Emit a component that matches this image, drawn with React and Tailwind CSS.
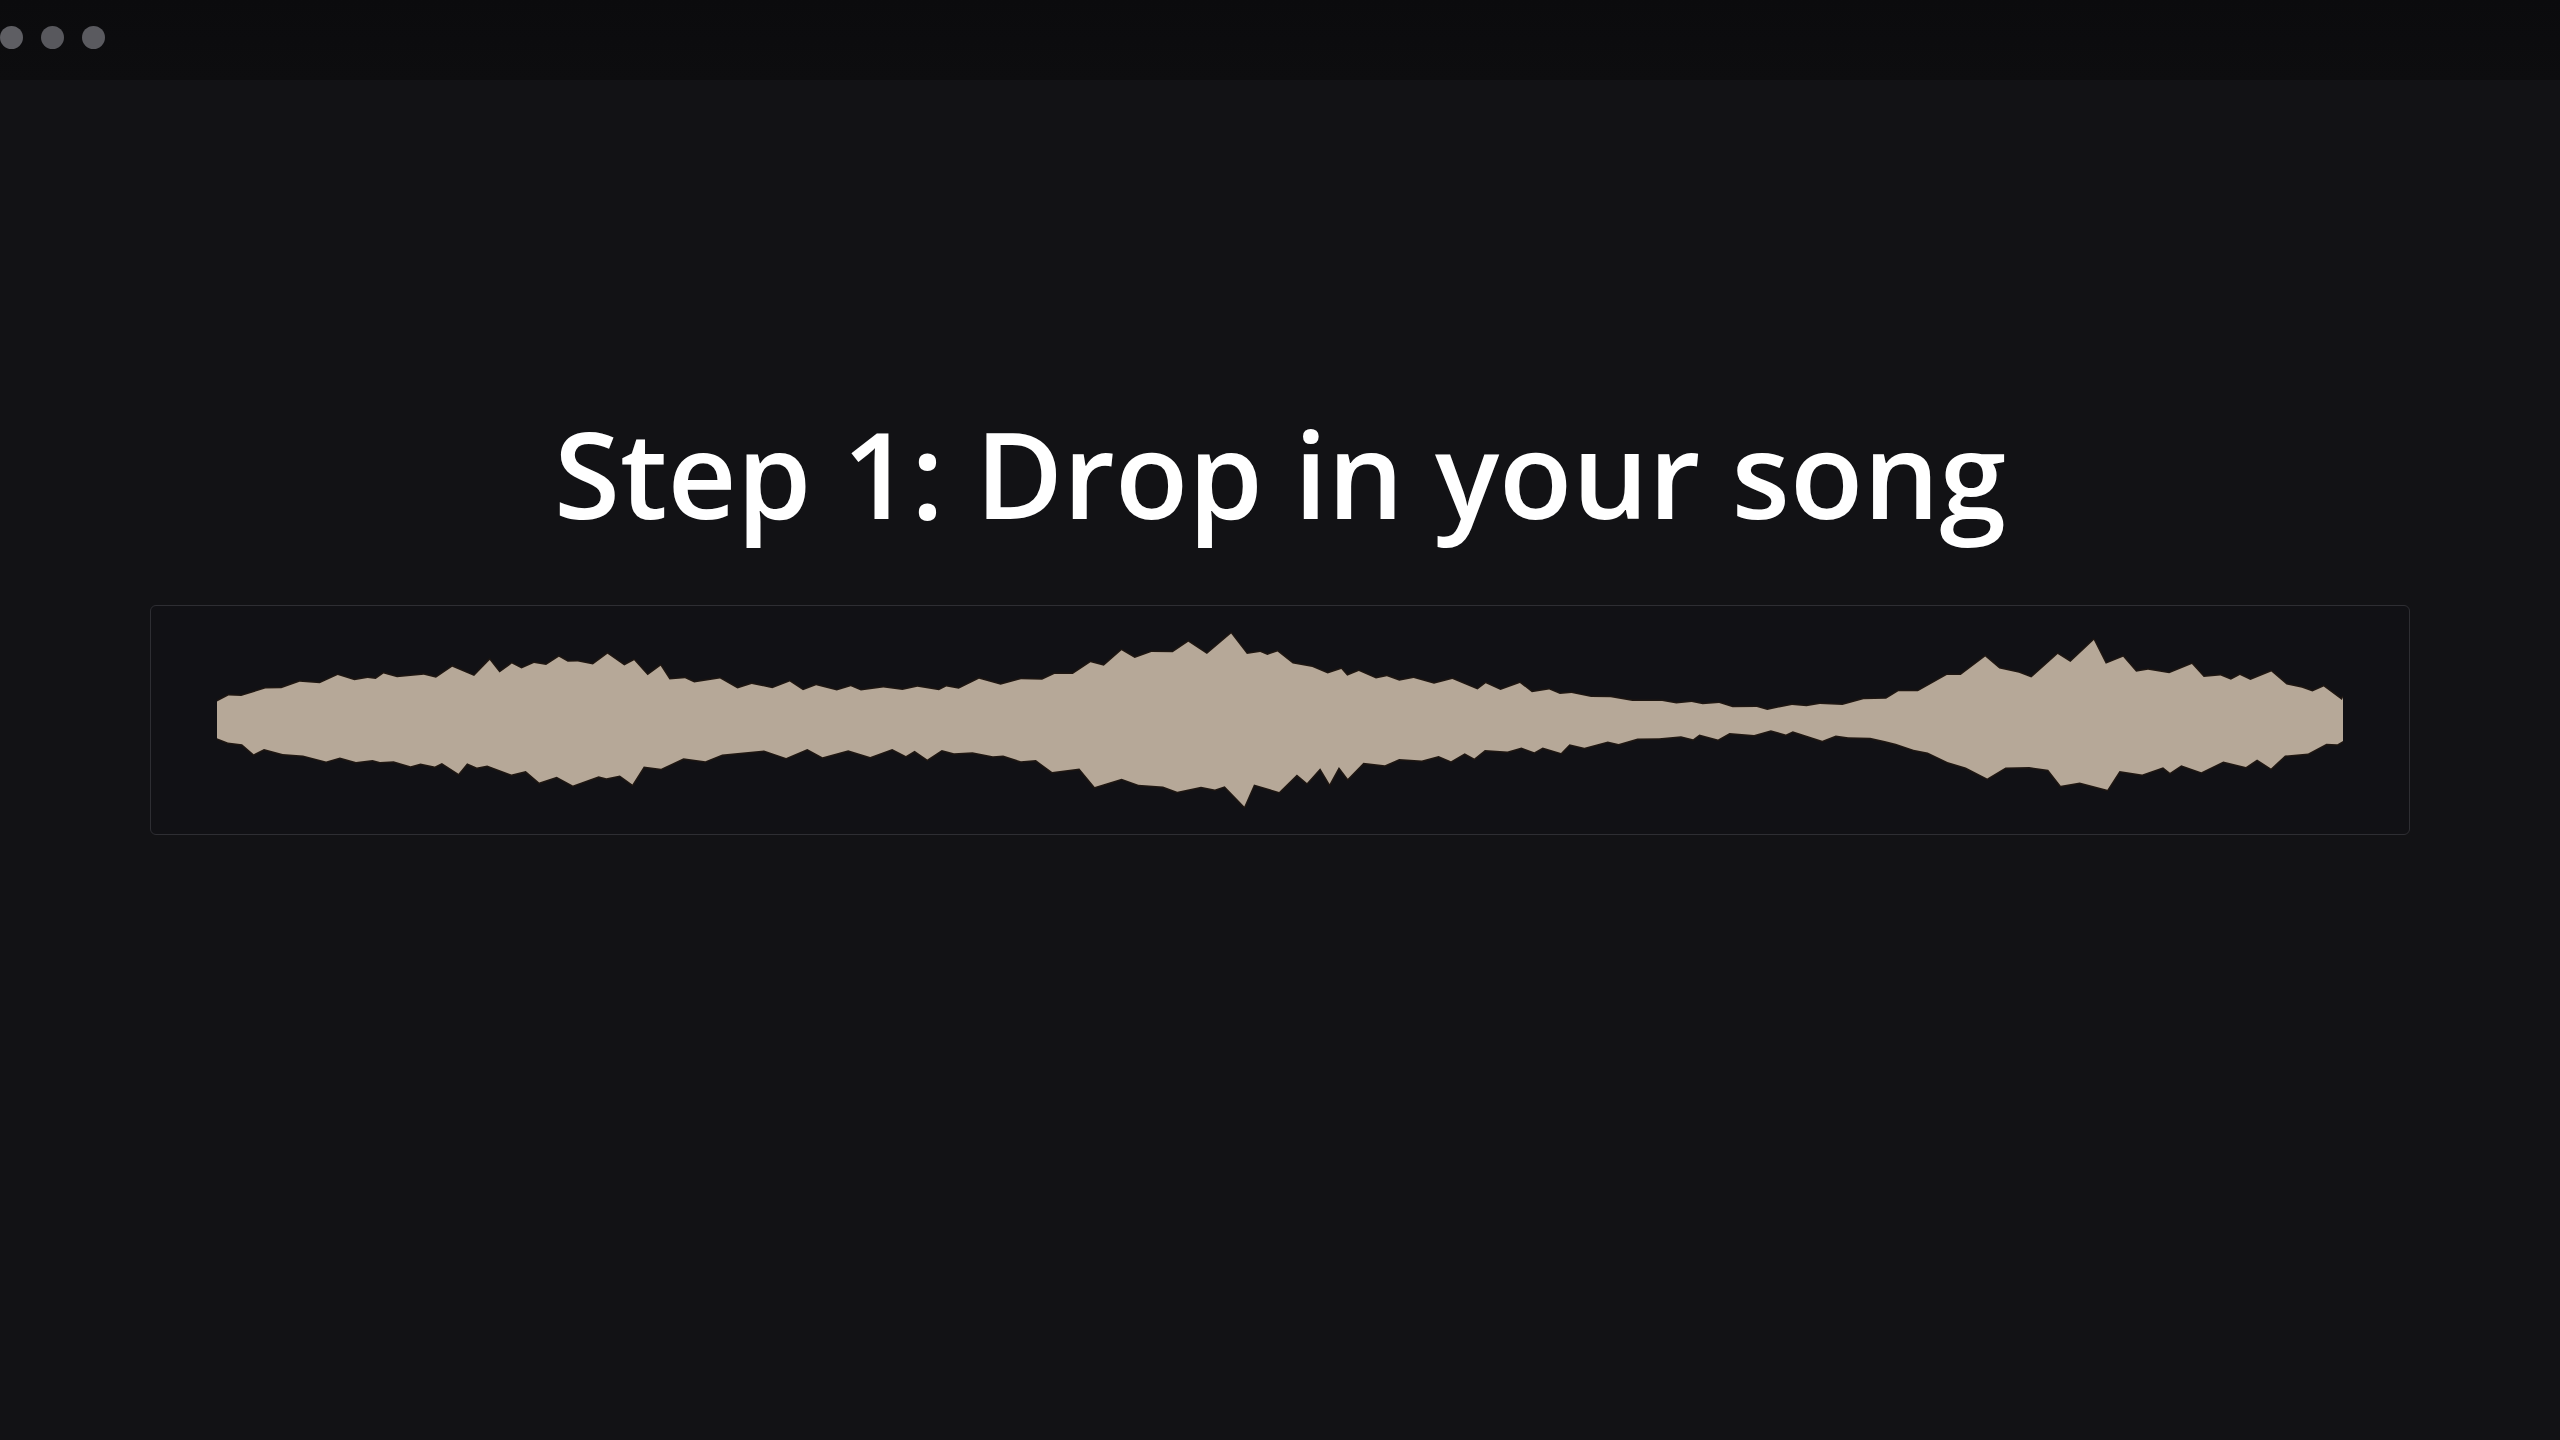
import React from 'react';

const ENVELOPE = [
  [0, 21], [44, 33], [93, 41], [191, 49], [257, 49], [322, 62], [338, 66],
  [412, 62], [436, 49], [518, 36], [600, 33], [681, 33], [763, 36], [844, 49],
  [910, 69], [959, 78], [1057, 73], [1089, 57], [1171, 46], [1253, 36],
  [1334, 29], [1416, 20], [1498, 16], [1547, 11], [1579, 13], [1661, 20],
  [1726, 41], [1767, 65], [1808, 46], [1865, 73], [1906, 57], [1988, 49],
  [2069, 41], [2126, 21],
];

const WAVE_W = 2126;
const WAVE_H = 176;
const MID = WAVE_H / 2;

function envAt(x) {
  for (let i = 1; i < ENVELOPE.length; i++) {
    const [x1, y1] = ENVELOPE[i];
    const [x0, y0] = ENVELOPE[i - 1];
    if (x <= x1) return y0 + ((y1 - y0) * (x - x0)) / (x1 - x0);
  }
  return ENVELOPE[ENVELOPE.length - 1][1];
}

function seeded(seed) {
  let s = seed;
  return () => {
    s = (s * 1664525 + 1013904223) % 4294967296;
    return s / 4294967296;
  };
}

// one edge: troughs sit a little under the envelope, spikes poke out past it
function edge(seed) {
  const rnd = seeded(seed);
  const pts = [];
  let x = 0;
  while (x < WAVE_W) {
    const step = 18 + rnd() * 26;
    const e = envAt(x);
    pts.push([x, e * 0.86 + rnd() * 2]);
    const sx = Math.min(x + step * (0.35 + rnd() * 0.35), WAVE_W);
    const se = envAt(sx);
    const r = rnd();
    pts.push([sx, se * (0.88 + r * r * 0.24) + 1 + rnd() * 3]);
    x += step;
  }
  pts.push([WAVE_W, envAt(WAVE_W)]);
  return pts;
}

function buildWave() {
  const top = edge(11);
  const bot = edge(97);
  let d = `M0 ${MID} `;
  top.forEach(([x, h]) => { d += `L${x.toFixed(1)} ${(MID - h).toFixed(1)} `; });
  d += `L${WAVE_W} ${MID} `;
  bot.reverse().forEach(([x, h]) => { d += `L${x.toFixed(1)} ${(MID + h).toFixed(1)} `; });
  return d + 'Z';
}

const WAVE_PATH = buildWave();

function Waveform() {
  return (
    <svg width={WAVE_W} height={WAVE_H} viewBox={`0 0 ${WAVE_W} ${WAVE_H}`}>
      <path
        d={WAVE_PATH}
        fill="#b6a898"
        stroke="#1f1712"
        strokeWidth="3"
        strokeLinejoin="round"
        style={{ paintOrder: 'stroke' }}
      />
    </svg>
  );
}

export default function App() {
  return (
    <div className="min-h-screen w-full bg-[#121215] font-['Open_Sans','Liberation_Sans',sans-serif]">
      {/* window bar */}
      <div className="h-[80px] bg-gradient-to-b from-[#0b0b0d] to-[#0d0d0f] flex items-start pt-[26px] gap-[18px]">
        <span className="w-[23px] h-[23px] rounded-full bg-[#5e5e63]" />
        <span className="w-[23px] h-[23px] rounded-full bg-[#58585d]" />
        <span className="w-[23px] h-[23px] rounded-full bg-[#5a5a5f]" />
      </div>

      <div className="pt-[333px] flex flex-col items-center">
        <h1 className="text-[120px] leading-none font-semibold text-white text-center">
          Step 1: Drop in your song
        </h1>

        <div className="mt-[72px] w-[2260px] h-[230px] rounded-md border border-[#2e2e33] bg-[#111115] flex items-center justify-center">
          <Waveform />
        </div>
      </div>
    </div>
  );
}
